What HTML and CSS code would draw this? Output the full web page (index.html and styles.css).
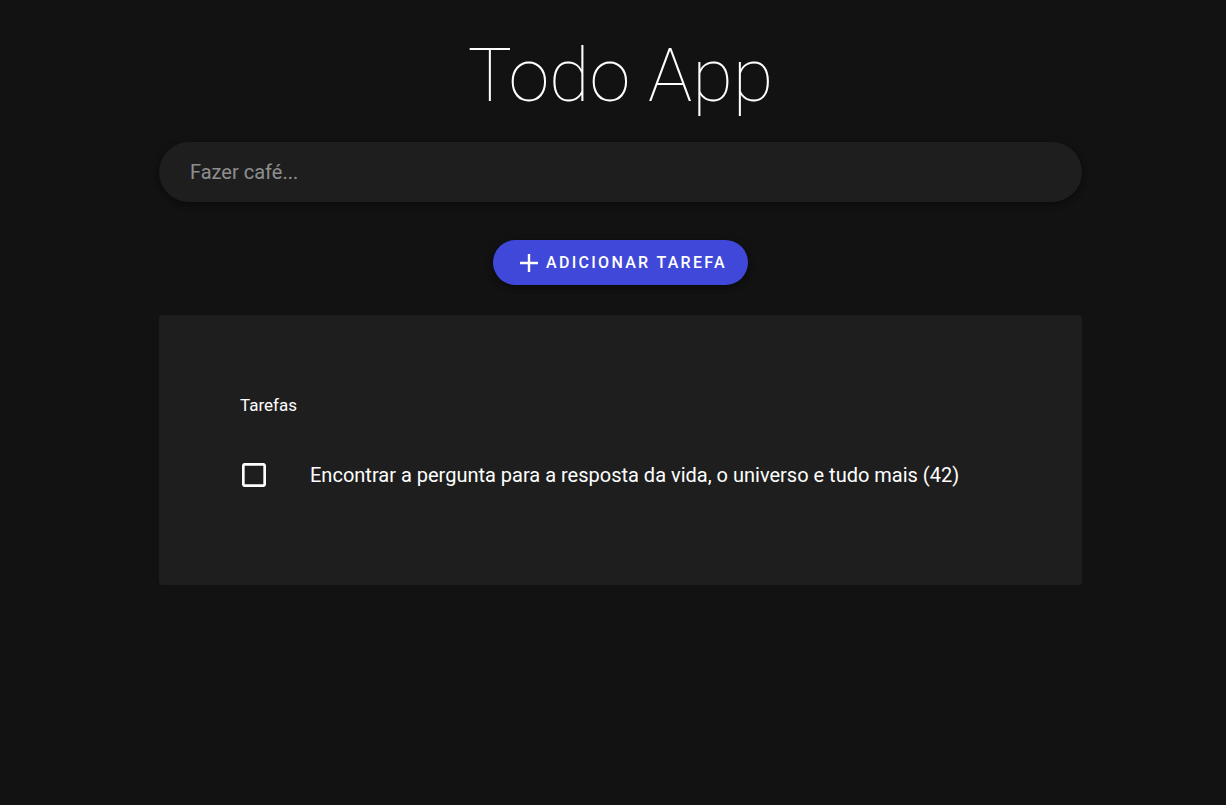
FILE: index.html
```html
<!DOCTYPE html>
<html lang="pt">
<head>
<meta charset="utf-8">
<title>Todo App</title>
<link rel="stylesheet" href="styles.css">
</head>
<body>
<main class="app">
  <h1 class="title">Todo App</h1>
  <div class="input-wrap">
    <input class="task-input" type="text" placeholder="Fazer café...">
  </div>
  <div class="actions">
    <button class="add-btn" type="button">
      <svg class="plus" viewBox="0 0 18 18" width="18" height="18"><path d="M9 0v18M0 9h18" stroke="currentColor" stroke-width="2.4" fill="none"/></svg>
      <span>Adicionar tarefa</span>
    </button>
  </div>
  <section class="card">
    <h2 class="card-title">Tarefas</h2>
    <ul class="list">
      <li class="item">
        <span class="check">
          <svg viewBox="0 0 24 24" width="32" height="32"><path d="M19 5v14H5V5h14m0-2H5c-1.1 0-2 .9-2 2v14c0 1.1.9 2 2 2h14c1.1 0 2-.9 2-2V5c0-1.1-.9-2-2-2z" fill="currentColor"/></svg>
        </span>
        <span class="item-text">Encontrar a pergunta para a resposta da vida, o universo e tudo mais (42)</span>
      </li>
    </ul>
  </section>
</main>
</body>
</html>
```
FILE: styles.css
```css
html, body {
  margin: 0;
  padding: 0;
  background: #121212;
  color: #fff;
  font-family: Roboto, "Noto Sans", sans-serif;
}
.app {
  width: 923px;
  margin-left: 159px;
  display: flex;
  flex-direction: column;
}
.title {
  margin: 26px 0 0;
  text-align: center;
  font-weight: 100;
  font-size: 74px;
  line-height: 100px;
  letter-spacing: 0;
}
.input-wrap {
  margin-top: 16px;
}
.task-input {
  box-sizing: border-box;
  width: 100%;
  height: 60px;
  border: none;
  outline: none;
  border-radius: 30px;
  background: #1e1e1e;
  color: #fff;
  padding: 0 31px;
  font-family: Roboto, sans-serif;
  font-size: 20px;
  box-shadow: 0 2px 4px -1px rgba(0,0,0,0.2), 0 4px 5px 0 rgba(0,0,0,0.14), 0 1px 10px 0 rgba(0,0,0,0.12);
}
.task-input::placeholder {
  color: rgba(255,255,255,0.5);
}
.actions {
  display: flex;
  justify-content: center;
  margin-top: 38px;
}
.add-btn {
  display: flex;
  align-items: center;
  gap: 8px;
  height: 45px;
  padding: 0 21px 0 27px;
  border: none;
  border-radius: 23px;
  background: #3f48d8;
  color: #fff;
  font-family: Roboto, sans-serif;
  font-weight: 500;
  font-size: 16px;
  letter-spacing: 2.3px;
  text-transform: uppercase;
  box-shadow: 0 2px 4px -1px rgba(0,0,0,0.2), 0 4px 5px 0 rgba(0,0,0,0.14), 0 1px 10px 0 rgba(0,0,0,0.12);
}
.plus {
  width: 18px;
  height: 18px;
  display: block;
}
.card {
  margin-top: 30px;
  background: #1e1e1e;
  border-radius: 4px;
  height: 270px;
  box-sizing: border-box;
  padding: 80px 81px 0;
}
.card-title {
  margin: 0;
  font-size: 17px;
  font-weight: 400;
  line-height: 20px;
}
.list {
  list-style: none;
  margin: 44px 0 0;
  padding: 0;
}
.item {
  display: flex;
  align-items: center;
}
.check {
  width: 32px;
  height: 32px;
  margin-left: -2px;
  margin-right: 40px;
  color: #fff;
}
.check svg {
  display: block;
}
.item-text {
  font-size: 20px;
  line-height: 28px;
}
```
